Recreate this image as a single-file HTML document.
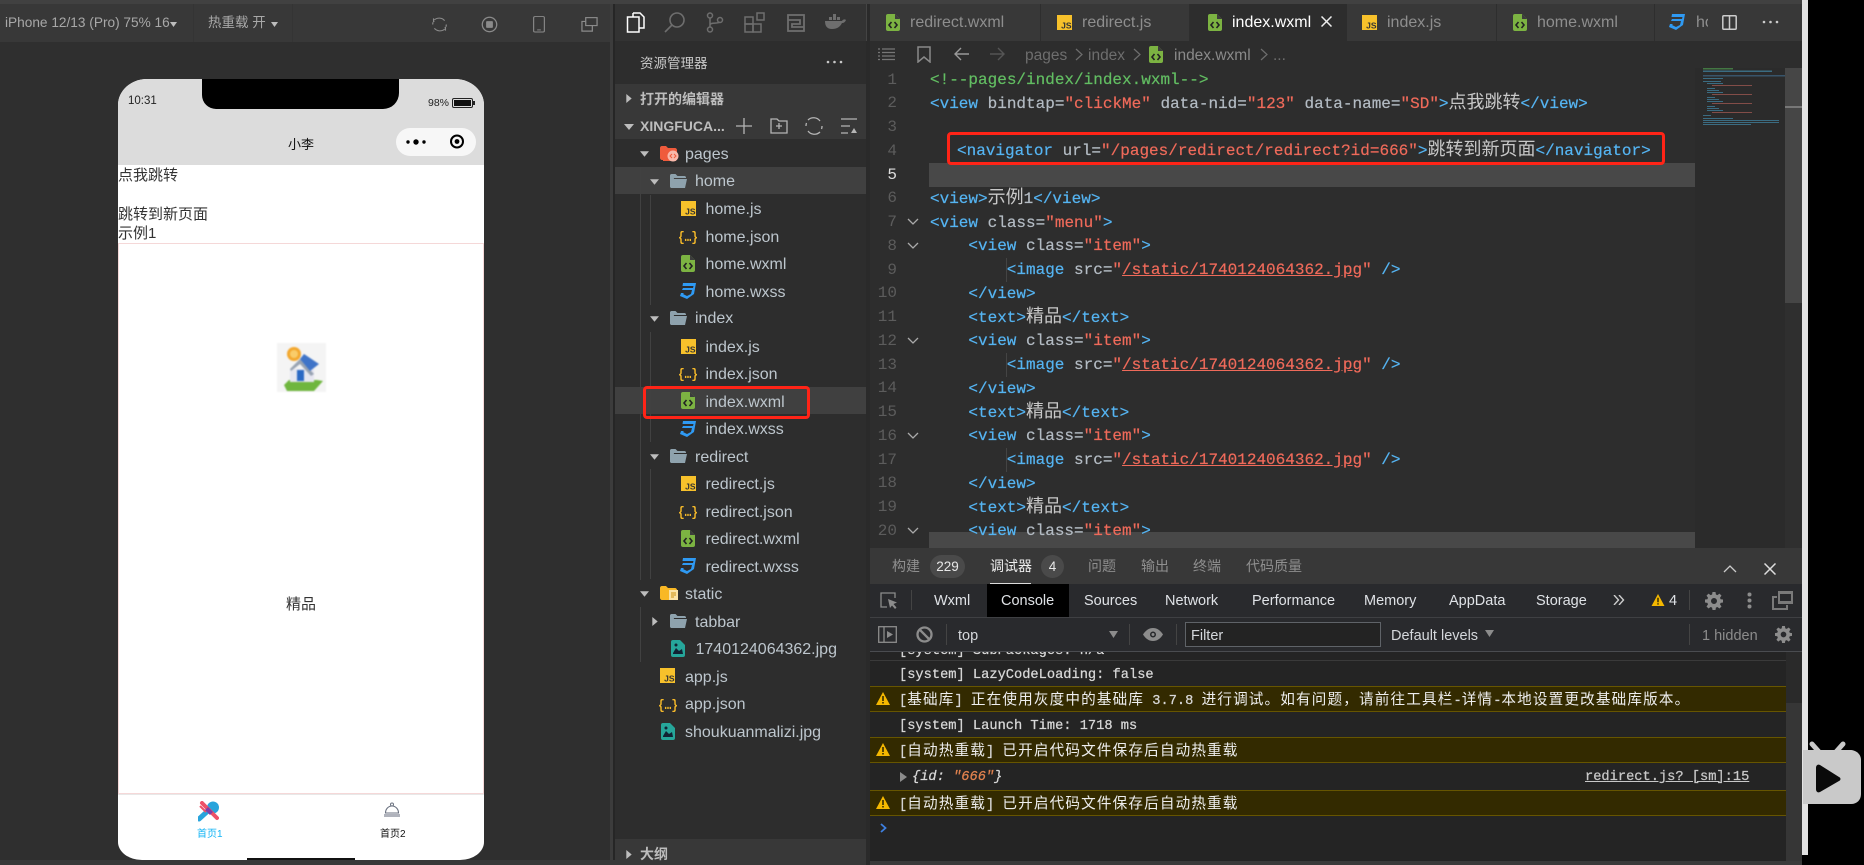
<!DOCTYPE html>
<html><head><meta charset="utf-8"><style>
html,body{margin:0;padding:0;background:#000}
body{position:relative;width:1864px;height:865px;overflow:hidden;font-family:"Liberation Sans","Noto Sans CJK SC",sans-serif}
.a{position:absolute;white-space:nowrap}
.t{position:absolute;white-space:nowrap;font-size:16px;line-height:24px;height:24px;color:#bdc6cd;margin-top:1px}
.h{position:absolute;white-space:nowrap;font-size:14px;line-height:20px;font-weight:bold;color:#bdbdbd}
.i{position:absolute}
.l{position:absolute;left:874px;width:23px;text-align:right;font:16px/24px "Liberation Mono",monospace;color:#5c5c5c;margin-top:-.5px}
.c{position:absolute;white-space:pre;font:16px/24px "Liberation Mono","Noto Sans CJK SC",monospace;color:#b3bbc3;-webkit-text-stroke:.2px}
.c b{font-weight:normal;color:#55b4f2}.c i{font-style:normal;color:#ef6a5a}.c u{text-decoration:underline;color:#ef6a5a}
.c s{text-decoration:none;font-size:18px;line-height:0;color:#c8c8c8;font-family:"Liberation Sans","Noto Sans CJK SC",sans-serif;-webkit-text-stroke:0}
.p{position:absolute;white-space:nowrap;font-size:14px;line-height:20px;color:#8f8f8f;top:556px}
.d{position:absolute;white-space:nowrap;font-size:14.5px;line-height:20px;color:#dfe2e6;top:591px}
.f{position:absolute;white-space:nowrap;font-size:14.5px;line-height:20px;top:626px;color:#d5d8dc}
.m{position:absolute;left:899px;white-space:pre;font:13.7px/20px "Liberation Mono","Noto Sans CJK SC",monospace;color:#d8d8d8;-webkit-text-stroke:.25px}
.m s{text-decoration:none;font-family:"WenQuanYi Zen Hei","Noto Sans CJK SC",sans-serif;font-size:14.6px;line-height:0;letter-spacing:1.15px;color:#eee;-webkit-text-stroke:0}
.w{position:absolute;left:870px;width:916px;background:#332a00;border-top:1px solid #665500;border-bottom:1px solid #665500;box-sizing:border-box}
.tab{position:absolute;top:4px;height:37px;background:#383838;border-right:1px solid #2e2e2e;box-sizing:border-box}
.tt{position:absolute;top:7px;font-size:16px;line-height:24px;white-space:nowrap;color:#8e8e8e}
.g{position:absolute;width:1px;background:#414141}
</style></head><body>
<svg width="0" height="0" style="position:absolute"><defs>
<symbol id="js" viewBox="0 0 15 15"><rect width="15" height="15" fill="#f7c12b"/><text x="14.500" y="13.500" text-anchor="end" font-family="Liberation Sans" font-weight="bold" font-size="8.500" fill="#333">JS</text></symbol>
<symbol id="json" viewBox="0 0 20 16"><text x="10" y="13" text-anchor="middle" font-family="Liberation Mono" font-weight="bold" font-size="14" fill="#f5b92a" textLength="20" lengthAdjust="spacingAndGlyphs">{…}</text></symbol>
<symbol id="wx" viewBox="0 0 14 17"><path d="M2 0h7l5 5v10a2 2 0 0 1-2 2H2a2 2 0 0 1-2-2V2a2 2 0 0 1 2-2z" fill="#7cb342"/><path d="M9 0v5h5z" fill="#3c3c3c"/><path d="M5.500 8 3 11l2.500 3M8.500 8 11 11l-2.500 3" stroke="#222" stroke-width="1.600" fill="none"/></symbol>
<symbol id="css" viewBox="0 0 16 16"><path d="M3 0h13l-2 11-7 5-7-3 1-3h3l-1 1 4 2 4-2 1-4H2l1-2h10l.5-2H2.500z" fill="#2f9af3"/></symbol>
<symbol id="fo" viewBox="0 0 18 14"><path d="M1 1.500C1 .7 1.700 0 2.500 0h4l2 2h7c.8 0 1.500.7 1.500 1.500V4H5L3 14H2.500C1.700 14 1 13.300 1 12.500z" fill="#8ea2ad"/><path d="M4 5h14l-2 9H2z" fill="#8ea2ad"/></symbol>
<symbol id="img" viewBox="0 0 14 17"><path d="M2 0h7l5 5v10a2 2 0 0 1-2 2H2a2 2 0 0 1-2-2V2a2 2 0 0 1 2-2z" fill="#26a69a"/><path d="M2 13l3-5 3 3 3-2 1 5H2z" fill="#123"/><circle cx="5" cy="5" r="1.500" fill="#123"/></symbol>
<symbol id="dn" viewBox="0 0 10 6"><path d="M0 0h10L5 6z" fill="#bdbdbd"/></symbol>
<symbol id="rt" viewBox="0 0 6 10"><path d="M0 0v10l6-5z" fill="#bdbdbd"/></symbol>
<symbol id="gear" viewBox="0 0 18 18"><path fill-rule="evenodd" d="M7.500 0h3l.4 2.500 1.500.6L14.500 1.600l2 2-1.500 2.100.6 1.500L18 7.500v3l-2.400.4-.6 1.500 1.500 2.100-2 2-2.100-1.500-1.500.6-.4 2.400h-3l-.4-2.400-1.500-.6-2.100 1.500-2-2L3 12.400l-.6-1.500L0 10.500v-3l2.400-.3.6-1.500L1.500 3.600l2-2L5.600 3.100l1.500-.6zM9 6a3 3 0 1 0 0 6 3 3 0 0 0 0-6z" fill="#8c8c8c"/></symbol>
<symbol id="tri" viewBox="0 0 14 13"><path d="M7 0l7 13H0z" fill="#f5b800"/><path d="M6.200 4h1.600v5H6.200zM6.200 10h1.600v1.500H6.200z" fill="#332a00"/></symbol>
</defs></svg>

<!-- top strip & left simulator -->
<div class="a" style="left:0;top:0;width:1802px;height:4px;background:#414141"></div>
<div class="a" style="left:0;top:42px;width:610px;height:823px;background:#2f2f2f"></div>
<div class="a" style="left:0;top:4px;width:610px;height:38px;background:#383838"></div>
<div class="a" style="left:193px;top:4px;width:1px;height:38px;background:#343434"></div>
<div class="a" style="left:292px;top:4px;width:1px;height:38px;background:#343434"></div>
<div class="a" style="left:5px;top:13px;font-size:13.660px;line-height:20px;color:#a8a8a8">iPhone 12/13 (Pro) 75% 16</div>
<svg class="i" style="left:170px;top:21.500px" width="7" height="5" viewBox="0 0 10 6" preserveAspectRatio="none"><use href="#dn" width="10" height="6"/></svg>
<div class="a" style="left:208px;top:13px;font-size:13.500px;line-height:20px;color:#a8a8a8">热重载 开</div>
<svg class="i" style="left:271px;top:21.500px" width="7" height="5" viewBox="0 0 10 6" preserveAspectRatio="none"><use href="#dn" width="10" height="6"/></svg>
<svg class="i" style="left:431px;top:15.500px" width="17" height="17" viewBox="0 0 20 22" preserveAspectRatio="none" fill="none" stroke="#8b8b8b" stroke-width="1.400"><path d="M16 6a8 8 0 0 0-12-1M4 16a8 8 0 0 0 12 1M3 3v4h1M17 19v-4h-1M2 11a8 8 0 0 1 .5-3M18 11a8 8 0 0 1-.5 3"/></svg>
<svg class="i" style="left:480.500px;top:15.500px" width="17" height="17" viewBox="0 0 20 20" fill="none" stroke="#8b8b8b" stroke-width="1.500"><circle cx="10" cy="10" r="8.500"/><rect x="6" y="6" width="8" height="8" rx="1" fill="#8b8b8b" stroke="none"/></svg>
<svg class="i" style="left:533px;top:15.500px" width="12" height="17" viewBox="0 0 13 22" preserveAspectRatio="none" fill="none" stroke="#8b8b8b" stroke-width="1.200"><rect x=".7" y=".7" width="11.600" height="20" rx="1.500"/><path d="M4.500 18h4"/></svg>
<svg class="i" style="left:580.500px;top:16.500px" width="17" height="15" viewBox="0 0 18 17" preserveAspectRatio="none" fill="none" stroke="#8b8b8b" stroke-width="1.300"><rect x="5" y=".7" width="12" height="9"/><path d="M5 5H1v11h11v-6"/></svg>
<div class="a" style="left:610px;top:4px;width:3px;height:861px;background:#3c3c3c"></div>
<div class="a" style="left:613px;top:4px;width:2px;height:861px;background:#262626"></div>

<!-- phone -->
<div class="a" style="left:118px;top:79px;width:366px;height:781px;background:#fff;border-radius:29px 29px 24px 24px/26px 26px 18px 18px;overflow:hidden">
  <div class="a" style="left:0;top:0;width:366px;height:86px;background:#dcdcdc"></div>
  <div class="a" style="left:84px;top:0;width:197px;height:30px;background:#000;border-radius:0 0 16px 14px"></div>
  <div class="a" style="left:10px;top:15px;font-size:11.500px;line-height:14px;color:#222">10:31</div>
  <div class="a" style="left:310px;top:17px;font-size:10.500px;line-height:14px;color:#222">98%</div>
  <div class="a" style="left:334px;top:19px;width:21px;height:10px;border:1px solid #222;box-sizing:border-box;border-radius:2px;padding:1px"><div style="background:#111;height:100%"></div></div>
  <div class="a" style="left:355px;top:22px;width:2px;height:4px;background:#222"></div>
  <div class="a" style="left:124px;top:57px;width:118px;text-align:center;font-size:13px;line-height:18px;color:#111">小李</div>
  <div class="a" style="left:278px;top:49px;width:80px;height:28px;background:#f7f7f7;border-radius:14px"></div>
  <svg class="i" style="left:286px;top:54.700px" width="24" height="16" fill="#000"><circle cx="4" cy="8" r="1.700"/><circle cx="12" cy="8" r="2.700"/><circle cx="20" cy="8" r="1.700"/></svg>
  <svg class="i" style="left:330.600px;top:54.200px" width="17" height="17"><circle cx="8" cy="8.500" r="6" fill="none" stroke="#000" stroke-width="2"/><circle cx="8" cy="8.500" r="2.400" fill="#000"/></svg>
  <div class="a" style="left:0;top:84.500px;font-size:15px;line-height:23px;color:#333">点我跳转</div>
  <div class="a" style="left:0;top:123.500px;font-size:15px;line-height:23px;color:#333">跳转到新页面</div>
  <div class="a" style="left:0;top:142.500px;font-size:15px;line-height:23px;color:#333">示例1</div>
  <div class="a" style="left:0;top:164px;width:366px;height:551px;border:1px solid #f5d8d8;border-top-width:1.500px;box-sizing:border-box"></div>
  <svg class="i" style="left:159px;top:264px;filter:blur(.7px)" width="49" height="49" viewBox="0 0 49 49"><rect width="49" height="49" fill="#f4f4f4"/><circle cx="17" cy="11" r="7" fill="#f3a72e"/><circle cx="17" cy="11" r="4" fill="#f9cc6a"/><path d="M7 42l5-5 28 0 6 1-9 10H10z" fill="#6fb63e"/><path d="M13 26h24v13H13z" fill="#e6e6f0"/><path d="M13 26l10-10 14 15-3 2-11-12-9 7z" fill="#98a3b2"/><path d="M27 11l15 10-9 7-10-12z" fill="#3f74c8"/><rect x="20" y="27" width="7" height="11" fill="#2a68c4"/></svg>
  <div class="a" style="top:516px;width:306px;text-align:center;font-size:15px;line-height:20px;color:#333;left:30px">精品</div>
  <div class="a" style="left:0;top:715px;width:366px;height:1px;background:#e8e8e8"></div>
  <svg class="i" style="left:80px;top:722px;filter:blur(.3px)" width="22" height="21" viewBox="0 0 22 21"><path d="M1 18L12 8" stroke="#29a4dc" stroke-width="5" stroke-linecap="round"/><circle cx="15" cy="6.500" r="6" fill="#29a4dc"/><path d="M4 2l15 15" stroke="#ee5167" stroke-width="4" stroke-linecap="round"/><path d="M2 5l6 6" stroke="#ee5167" stroke-width="2"/><path d="M10 6l5 5-3 3-5-5z" fill="#7f3fa8"/></svg>
  <svg class="i" style="left:266px;top:723px" width="16" height="16" viewBox="0 0 16 16"><circle cx="8" cy="2.500" r="1.500" fill="none" stroke="#6b7280" stroke-width="1"/><path d="M1.500 11a6.500 7 0 0 1 13 0z" fill="none" stroke="#6b7280" stroke-width="1.100"/><rect x="0" y="12" width="16" height="3" fill="#b0b3bc"/></svg>
  <div class="a" style="left:79px;top:749px;font-size:10px;line-height:14px;color:#14b4f5;width:24px;text-align:center">首页1</div>
  <div class="a" style="left:262px;top:749px;font-size:10px;line-height:14px;color:#111;width:24px;text-align:center">首页2</div>
  <div class="a" style="left:129px;top:779px;width:108px;height:2px;background:#111"></div>
</div>
<div class="a" style="left:0;top:860px;width:615px;height:5px;background:#383838"></div>

<!-- sidebar -->
<div class="a" style="left:615px;top:4px;width:255px;height:861px;background:#2d2d2d"></div>
<div class="a" style="left:615px;top:4px;width:251px;height:37px;background:#333"></div>
<svg class="i" style="left:625px;top:12px" width="20" height="21" fill="none" stroke="#fff" stroke-width="1.500"><path d="M8 1h7l4 4v11h-5"/><path d="M8 1v4H2.500v15H14V5H8"/></svg>
<svg class="i" style="left:664px;top:12px" width="22" height="21" fill="none" stroke="#6e6e6e" stroke-width="1.600"><circle cx="13" cy="8" r="7"/><path d="M8 13l-7 7"/></svg>
<svg class="i" style="left:706px;top:12px" width="18" height="21" fill="none" stroke="#6e6e6e" stroke-width="1.500"><circle cx="4" cy="3.500" r="2.500"/><circle cx="4" cy="17.500" r="2.500"/><circle cx="14" cy="8" r="2.500"/><path d="M4 6v9M4 13c0-3 8-1 10-3"/></svg>
<svg class="i" style="left:744px;top:12px" width="22" height="21" fill="none" stroke="#6e6e6e" stroke-width="1.500"><rect x="1" y="5" width="8" height="7"/><rect x="1" y="12" width="8" height="8"/><rect x="9" y="12" width="8" height="8"/><rect x="13" y="1" width="7" height="7"/></svg>
<svg class="i" style="left:787px;top:14px" width="20" height="18" fill="none" stroke="#6e6e6e" stroke-width="1.800"><rect x="1" y="1" width="16" height="16"/><path d="M1 6h12v4H5v3h12"/></svg>
<svg class="i" style="left:825px;top:14px" width="22" height="16" fill="#6e6e6e"><path d="M0 7h17c1-2 3-2 4-1-1 2-2 3-4 3-2 4-5 6-10 6-5 0-7-3-7-8z"/><rect x="4" y="3" width="3" height="3"/><rect x="8" y="3" width="3" height="3"/><rect x="12" y="3" width="3" height="3"/><rect x="8" y="0" width="3" height="3"/></svg>
<div class="a" style="left:866px;top:4px;width:4px;height:861px;background:#2a2a2a"></div>
<div class="a" style="left:866px;top:4px;width:1px;height:37px;background:#444"></div>
<div class="h" style="left:640px;top:54px;font-weight:normal;font-size:13.500px;color:#c8c8c8">资源管理器</div>
<svg class="i" style="left:826px;top:60px" width="17" height="4" fill="#c8c8c8"><circle cx="2" cy="2" r="1.300"/><circle cx="8.500" cy="2" r="1.300"/><circle cx="15" cy="2" r="1.300"/></svg>

<div class="a" style="left:615px;top:84px;width:251px;height:55px;background:#383838"></div>
<svg class="i" style="left:626px;top:94px" width="6" height="9"><use href="#rt"/></svg>
<div class="h" style="left:640px;top:89px">打开的编辑器</div>
<svg class="i" style="left:624px;top:124px" width="10" height="6"><use href="#dn"/></svg>
<div class="h" style="left:640px;top:116px">XINGFUCA...</div>
<svg class="i" style="left:735px;top:118px" width="108" height="16" fill="none" stroke="#b5b5b5" stroke-width="1.300"><path d="M9 0v16M1 8h16"/><path d="M36 1h6l2 2h8v12H36zM44 5v6M41 8h6"/></svg>
<svg class="i" style="left:804px;top:117px" width="20" height="18" fill="none" stroke="#b5b5b5" stroke-width="1.300"><path d="M16 4a8 8 0 0 0-12-1M4 14a8 8 0 0 0 12 1M2 9a8 8 0 0 1 .5-3M18 9a8 8 0 0 1-.5 3"/></svg>
<svg class="i" style="left:840px;top:118px" width="18" height="16" fill="none" stroke="#b5b5b5" stroke-width="1.300"><path d="M1 1h16M1 8h9M1 15h7"/><path d="M11 15h6l-3-5z" fill="#b5b5b5" stroke="none"/></svg>

<div class="a" style="left:615px;top:167px;width:251px;height:27px;background:#404040"></div>
<div class="a" style="left:615px;top:387px;width:251px;height:27px;background:#404040"></div>
<div class="g" style="left:640px;top:168px;height:412px"></div>
<div class="g" style="left:650px;top:195px;height:110px"></div>
<div class="g" style="left:650px;top:332px;height:110px"></div>
<div class="g" style="left:650px;top:469px;height:110px"></div>
<div class="g" style="left:640px;top:607px;height:55px"></div>

<svg class="i" style="left:640px;top:151px" width="9" height="6"><use href="#dn"/></svg>
<svg class="i" style="left:660px;top:146px" width="19" height="16" viewBox="0 0 19 16"><path d="M0 2c0-1 .7-2 2-2h4l2 2h7c1 0 2 1 2 2v10H2c-1 0-2-1-2-2z" fill="#ef5b3c"/><path d="M3 5h13v10H3z" fill="#ef5b3c"/><circle cx="13" cy="10" r="5.500" fill="#f8b9ab"/><path d="M12 8l-2 2 2 2M14 8l2 2-2 2" stroke="#ef5b3c" fill="none"/></svg>
<div class="t" style="left:685px;top:142px">pages</div>
<svg class="i" style="left:650px;top:179px" width="9" height="6"><use href="#dn"/></svg>
<svg class="i" style="left:669px;top:174px" width="18" height="14"><use href="#fo"/></svg>
<div class="t" style="left:695px;top:169px">home</div>
<svg class="i" style="left:681px;top:201px" width="15" height="15"><use href="#js"/></svg><div class="t" style="left:705.500px;top:197px">home.js</div>
<svg class="i" style="left:678px;top:228px" width="20" height="16"><use href="#json"/></svg><div class="t" style="left:705.500px;top:224.500px">home.json</div>
<svg class="i" style="left:681px;top:255px" width="14" height="17"><use href="#wx"/></svg><div class="t" style="left:705.500px;top:252px">home.wxml</div>
<svg class="i" style="left:680px;top:283px" width="16" height="16"><use href="#css"/></svg><div class="t" style="left:705.500px;top:279.500px">home.wxss</div>
<svg class="i" style="left:650px;top:316px" width="9" height="6"><use href="#dn"/></svg>
<svg class="i" style="left:669px;top:311px" width="18" height="14"><use href="#fo"/></svg>
<div class="t" style="left:695px;top:306px">index</div>
<svg class="i" style="left:681px;top:339px" width="15" height="15"><use href="#js"/></svg><div class="t" style="left:705.500px;top:334.500px">index.js</div>
<svg class="i" style="left:678px;top:365px" width="20" height="16"><use href="#json"/></svg><div class="t" style="left:705.500px;top:362px">index.json</div>
<svg class="i" style="left:681px;top:392px" width="14" height="17"><use href="#wx"/></svg><div class="t" style="left:705.500px;top:389.500px">index.wxml</div>
<svg class="i" style="left:680px;top:421px" width="16" height="16"><use href="#css"/></svg><div class="t" style="left:705.500px;top:417px">index.wxss</div>
<svg class="i" style="left:650px;top:454px" width="9" height="6"><use href="#dn"/></svg>
<svg class="i" style="left:669px;top:449px" width="18" height="14"><use href="#fo"/></svg>
<div class="t" style="left:695px;top:444.500px">redirect</div>
<svg class="i" style="left:681px;top:476px" width="15" height="15"><use href="#js"/></svg><div class="t" style="left:705.500px;top:472px">redirect.js</div>
<svg class="i" style="left:678px;top:503px" width="20" height="16"><use href="#json"/></svg><div class="t" style="left:705.500px;top:499.500px">redirect.json</div>
<svg class="i" style="left:681px;top:530px" width="14" height="17"><use href="#wx"/></svg><div class="t" style="left:705.500px;top:527px">redirect.wxml</div>
<svg class="i" style="left:680px;top:558px" width="16" height="16"><use href="#css"/></svg><div class="t" style="left:705.500px;top:554.500px">redirect.wxss</div>
<svg class="i" style="left:640px;top:591px" width="9" height="6"><use href="#dn"/></svg>
<svg class="i" style="left:660px;top:586px" width="19" height="15" viewBox="0 0 19 15"><path d="M0 2c0-1 .7-2 2-2h4l2 2h7c1 0 2 1 2 2v10H2c-1 0-2-1-2-2z" fill="#f9b825"/><rect x="9" y="4" width="9" height="10" fill="#fbe3a6"/><path d="M11 7h5M11 9h5M11 11h3" stroke="#c98f10"/></svg>
<div class="t" style="left:685px;top:582px">static</div>
<svg class="i" style="left:652px;top:617px" width="6" height="9"><use href="#rt"/></svg>
<svg class="i" style="left:669px;top:614px" width="18" height="14"><use href="#fo"/></svg>
<div class="t" style="left:695px;top:609.500px">tabbar</div>
<svg class="i" style="left:671px;top:640px" width="14" height="17"><use href="#img"/></svg><div class="t" style="left:695.500px;top:637px">1740124064362.jpg</div>
<svg class="i" style="left:660px;top:668px" width="15" height="15"><use href="#js"/></svg><div class="t" style="left:685px;top:665px">app.js</div>
<svg class="i" style="left:658px;top:696px" width="20" height="16"><use href="#json"/></svg><div class="t" style="left:685px;top:692px">app.json</div>
<svg class="i" style="left:661px;top:723px" width="14" height="17"><use href="#img"/></svg><div class="t" style="left:685px;top:720px">shoukuanmalizi.jpg</div>
<div class="a" style="left:615px;top:839px;width:251px;height:26px;background:#383838"></div>
<svg class="i" style="left:626px;top:850px" width="6" height="9"><use href="#rt"/></svg>
<div class="h" style="left:640px;top:844px">大纲</div>

<!-- red box sidebar -->
<div class="a" style="left:643px;top:386px;width:167px;height:33px;border:3.500px solid #ff2417;border-radius:4px;box-sizing:border-box"></div>

<!-- tabs -->
<div class="a" style="left:870px;top:4px;width:932px;height:37px;background:#383838"></div>
<div class="tab" style="left:870px;width:171px"><svg class="i" style="left:16px;top:10px" width="14" height="17"><use href="#wx"/></svg><div class="tt" style="left:40px">redirect.wxml</div></div>
<div class="tab" style="left:1041px;width:149px"><svg class="i" style="left:16px;top:11px" width="15" height="15"><use href="#js"/></svg><div class="tt" style="left:41px">redirect.js</div></div>
<div class="tab" style="left:1190px;width:157px;background:#2d2d2d;border:0"><svg class="i" style="left:18px;top:10px" width="14" height="17"><use href="#wx"/></svg><div class="tt" style="left:42px;color:#fff">index.wxml</div><svg class="i" style="left:131px;top:12px" width="11" height="11" stroke="#eee" stroke-width="1.500"><path d="M.5.5l10 10M10.500.5l-10 10"/></svg></div>
<div class="tab" style="left:1347px;width:150px"><svg class="i" style="left:15px;top:11px" width="15" height="15"><use href="#js"/></svg><div class="tt" style="left:40px">index.js</div></div>
<div class="tab" style="left:1497px;width:158px"><svg class="i" style="left:16px;top:10px" width="14" height="17"><use href="#wx"/></svg><div class="tt" style="left:40px">home.wxml</div></div>
<div class="tab" style="left:1655px;width:147px;border:0"><svg class="i" style="left:14px;top:10px" width="16" height="16"><use href="#css"/></svg><div class="tt" style="left:41px;width:12px;overflow:hidden">home.wxss</div></div>
<svg class="i" style="left:1722px;top:15px" width="15" height="15" fill="none" stroke="#ccc" stroke-width="1.500"><rect x=".8" y=".8" width="13.400" height="13.400" rx="1"/><path d="M7.500 1v13"/></svg>
<svg class="i" style="left:1762px;top:20px" width="17" height="4" fill="#ccc"><circle cx="2" cy="2" r="1.300"/><circle cx="8.500" cy="2" r="1.300"/><circle cx="15" cy="2" r="1.300"/></svg>

<!-- editor -->
<div class="a" style="left:870px;top:41px;width:932px;height:507px;background:#2d2d2d;overflow:hidden"></div>
<svg class="i" style="left:878px;top:48px" width="17" height="13" stroke="#777" stroke-width="1.300"><path d="M0 1h2M4 1h13M0 4.500h2M4 4.500h13M0 8h2M4 8h13M0 11.500h2M4 11.500h13"/></svg>
<svg class="i" style="left:917px;top:46px" width="14" height="17" fill="none" stroke="#8a8a8a" stroke-width="1.500"><path d="M1 1h12v15l-6-5-6 5z"/></svg>
<svg class="i" style="left:953px;top:47px" width="17" height="14" fill="none" stroke="#9a9a9a" stroke-width="1.400"><path d="M16 7H2M8 1L2 7l6 6"/></svg>
<svg class="i" style="left:989px;top:47px" width="17" height="14" fill="none" stroke="#555" stroke-width="1.400"><path d="M1 7h14M9 1l6 6-6 6"/></svg>
<div class="a" style="left:1025px;top:45px;font-size:15.500px;line-height:22px;color:#6e6e6e">pages</div>
<svg class="i" style="left:1075px;top:48px" width="8" height="13" fill="none" stroke="#6e6e6e" stroke-width="1.200"><path d="M1 1l6 5.500L1 12"/></svg>
<div class="a" style="left:1088px;top:45px;font-size:15.500px;line-height:22px;color:#6e6e6e">index</div>
<svg class="i" style="left:1133px;top:48px" width="8" height="13" fill="none" stroke="#6e6e6e" stroke-width="1.200"><path d="M1 1l6 5.500L1 12"/></svg>
<svg class="i" style="left:1149px;top:46px" width="14" height="17"><use href="#wx"/></svg>
<div class="a" style="left:1174px;top:45px;font-size:15.500px;line-height:22px;color:#8a8a8a">index.wxml</div>
<svg class="i" style="left:1260px;top:48px" width="8" height="13" fill="none" stroke="#6e6e6e" stroke-width="1.200"><path d="M1 1l6 5.500L1 12"/></svg>
<div class="a" style="left:1273px;top:45px;font-size:15.500px;line-height:22px;color:#6e6e6e">...</div>

<div class="a" style="left:929px;top:163px;width:766px;height:24px;background:#484848"></div>
<div class="a" style="left:929px;top:532px;width:766px;height:16px;background:#484848"></div>
<div class="a" style="left:1006px;top:258px;width:1px;height:24px;background:#444"></div>
<div class="a" style="left:1006px;top:353px;width:1px;height:24px;background:#444"></div>
<div class="a" style="left:1006px;top:448px;width:1px;height:24px;background:#444"></div>

<div class="l" style="top:68px">1</div><div class="l" style="top:91.750px">2</div><div class="l" style="top:115.500px">3</div><div class="l" style="top:139.250px">4</div><div class="l" style="top:163px;color:#ddd">5</div><div class="l" style="top:186.750px">6</div><div class="l" style="top:210.500px">7</div><div class="l" style="top:234.250px">8</div><div class="l" style="top:258px">9</div><div class="l" style="top:281.750px">10</div><div class="l" style="top:305.500px">11</div><div class="l" style="top:329.250px">12</div><div class="l" style="top:353px">13</div><div class="l" style="top:376.750px">14</div><div class="l" style="top:400.500px">15</div><div class="l" style="top:424.250px">16</div><div class="l" style="top:448px">17</div><div class="l" style="top:471.750px">18</div><div class="l" style="top:495.500px">19</div><div class="l" style="top:519.250px">20</div>
<svg class="i" style="left:907px;top:218px" width="12" height="8" fill="none" stroke="#aaa" stroke-width="1.300"><path d="M1 1l5 5 5-5"/></svg>
<svg class="i" style="left:907px;top:242px" width="12" height="8" fill="none" stroke="#aaa" stroke-width="1.300"><path d="M1 1l5 5 5-5"/></svg>
<svg class="i" style="left:907px;top:337px" width="12" height="8" fill="none" stroke="#aaa" stroke-width="1.300"><path d="M1 1l5 5 5-5"/></svg>
<svg class="i" style="left:907px;top:432px" width="12" height="8" fill="none" stroke="#aaa" stroke-width="1.300"><path d="M1 1l5 5 5-5"/></svg>
<svg class="i" style="left:907px;top:527px" width="12" height="8" fill="none" stroke="#aaa" stroke-width="1.300"><path d="M1 1l5 5 5-5"/></svg>

<div class="c" style="left:930px;top:68px;color:#62bd62">&lt;!--pages/index/index.wxml--&gt;</div>
<div class="c" style="left:930px;top:91.750px"><b>&lt;view</b> bindtap=<i>"clickMe"</i> data-nid=<i>"123"</i> data-name=<i>"SD"</i><b>&gt;</b><s>点我跳转</s><b>&lt;/view&gt;</b></div>
<div class="c" style="left:957px;top:139.250px"><b>&lt;navigator</b> url=<i>"/pages/redirect/redirect?id=666"</i><b>&gt;</b><s>跳转到新页面</s><b>&lt;/navigator&gt;</b></div>
<div class="c" style="left:930px;top:186.750px"><b>&lt;view&gt;</b><s>示例</s>1<b>&lt;/view&gt;</b></div>
<div class="c" style="left:930px;top:210.500px"><b>&lt;view</b> class=<i>"menu"</i><b>&gt;</b></div>
<div class="c" style="left:968.400px;top:234.250px"><b>&lt;view</b> class=<i>"item"</i><b>&gt;</b></div>
<div class="c" style="left:1006.800px;top:258px"><b>&lt;image</b> src=<i>"</i><u>/static/1740124064362.jpg</u><i>"</i> <b>/&gt;</b></div>
<div class="c" style="left:968.400px;top:281.750px"><b>&lt;/view&gt;</b></div>
<div class="c" style="left:968.400px;top:305.500px"><b>&lt;text&gt;</b><s>精品</s><b>&lt;/text&gt;</b></div>
<div class="c" style="left:968.400px;top:329.250px"><b>&lt;view</b> class=<i>"item"</i><b>&gt;</b></div>
<div class="c" style="left:1006.800px;top:353px"><b>&lt;image</b> src=<i>"</i><u>/static/1740124064362.jpg</u><i>"</i> <b>/&gt;</b></div>
<div class="c" style="left:968.400px;top:376.750px"><b>&lt;/view&gt;</b></div>
<div class="c" style="left:968.400px;top:400.500px"><b>&lt;text&gt;</b><s>精品</s><b>&lt;/text&gt;</b></div>
<div class="c" style="left:968.400px;top:424.250px"><b>&lt;view</b> class=<i>"item"</i><b>&gt;</b></div>
<div class="c" style="left:1006.800px;top:448px"><b>&lt;image</b> src=<i>"</i><u>/static/1740124064362.jpg</u><i>"</i> <b>/&gt;</b></div>
<div class="c" style="left:968.400px;top:471.750px"><b>&lt;/view&gt;</b></div>
<div class="c" style="left:968.400px;top:495.500px"><b>&lt;text&gt;</b><s>精品</s><b>&lt;/text&gt;</b></div>
<div class="c" style="left:968.400px;top:519.250px"><b>&lt;view</b> class=<i>"item"</i><b>&gt;</b></div>
<div class="a" style="left:947px;top:132px;width:718px;height:33px;border:3.500px solid #ff2417;border-radius:4px;box-sizing:border-box"></div>

<!-- minimap + scrollbar -->
<div class="a" style="left:1695px;top:68px;width:90px;height:480px;background:#2b2b2b"></div>
<div class="a" style="left:1785px;top:68px;width:17px;height:480px;background:#2f2f2f"></div>
<div class="a" style="left:1785px;top:68px;width:17px;height:235px;background:#464646"></div>
<div class="a" style="left:1785px;top:106px;width:17px;height:2px;background:#777"></div>
<svg class="i" style="left:1703px;top:68px;opacity:.8" width="82" height="60"><g fill="#3f7d98"><rect y="0" width="30" height="1.500" fill="#4a8a4a"/><rect y="2.500" width="69" height="1.500"/><rect x="0" y="7" width="82" height="1.500" fill="#3c5f7a"/><rect y="10" width="20" height="1"/><rect y="13" width="18" height="1"/><rect x="4" y="15" width="16" height="1"/><rect x="9" y="17" width="40" height="1" fill="#9a5650"/><rect x="4" y="20" width="8" height="1"/><rect x="4" y="22" width="12" height="1"/><rect x="4" y="24" width="16" height="1"/><rect x="9" y="26" width="40" height="1" fill="#9a5650"/><rect x="4" y="29" width="8" height="1"/><rect x="4" y="31" width="12" height="1"/><rect x="4" y="33" width="16" height="1"/><rect x="9" y="35" width="40" height="1" fill="#9a5650"/><rect x="4" y="38" width="8" height="1"/><rect x="4" y="40" width="12" height="1"/><rect x="4" y="42" width="16" height="1"/><rect x="9" y="44" width="40" height="1" fill="#9a5650"/><rect y="47" width="8" height="1"/><rect y="50" width="30" height="1"/><rect y="52" width="76" height="1"/><rect y="54" width="76" height="1"/><rect y="56" width="48" height="1"/></g></svg>

<!-- bottom panel -->
<div class="a" style="left:870px;top:548px;width:932px;height:36px;background:#383838"></div>
<div class="p" style="left:892px">构建</div>
<div class="a" style="left:930px;top:555px;width:35px;height:23px;border-radius:12px;background:#4a4a4a;color:#e8e8e8;font-size:13.500px;line-height:23px;text-align:center">229</div>
<div class="p" style="left:990px;color:#eee">调试器</div>
<div class="a" style="left:990px;top:582.500px;width:41px;height:1.500px;background:#ddd"></div>
<div class="a" style="left:1041px;top:555px;width:23px;height:23px;border-radius:12px;background:#4a4a4a;color:#e8e8e8;font-size:13.500px;line-height:23px;text-align:center">4</div>
<div class="p" style="left:1088px">问题</div><div class="p" style="left:1141px">输出</div><div class="p" style="left:1193px">终端</div><div class="p" style="left:1246px">代码质量</div>
<svg class="i" style="left:1723px;top:565px" width="14" height="8" fill="none" stroke="#ccc" stroke-width="1.300"><path d="M1 7l6-6 6 6"/></svg>
<svg class="i" style="left:1764px;top:563px" width="12" height="12" stroke="#ddd" stroke-width="1.500"><path d="M.5.5l11 11M11.500.5l-11 11"/></svg>

<div class="a" style="left:870px;top:584px;width:932px;height:33px;background:#292a2d"></div>
<div class="a" style="left:870px;top:617px;width:932px;height:1px;background:#3f4043"></div>
<div class="a" style="left:870px;top:618px;width:932px;height:33px;background:#292a2d"></div>
<div class="a" style="left:870px;top:651px;width:932px;height:1px;background:#4a4c50"></div>
<svg class="i" style="left:880px;top:592px" width="18" height="18" fill="none" stroke="#8c8c8c" stroke-width="1.300"><path d="M7 15H1V1h14v5"/><path d="M8 7l9 3.500-3.500 1.500 3 3.500-1.500 1.500-3-3.500L10 16z" fill="#8c8c8c" stroke="none"/></svg>
<div class="a" style="left:911px;top:590px;width:1px;height:20px;background:#444"></div>
<div class="d" style="left:934px">Wxml</div>
<div class="a" style="left:987px;top:584px;width:82px;height:33px;background:#000"></div>
<div class="d" style="left:1001px">Console</div><div class="d" style="left:1084px">Sources</div><div class="d" style="left:1165px">Network</div><div class="d" style="left:1252px">Performance</div><div class="d" style="left:1364px">Memory</div><div class="d" style="left:1449px">AppData</div><div class="d" style="left:1536px">Storage</div>
<svg class="i" style="left:1613px;top:595px" width="12" height="10" fill="none" stroke="#ccc" stroke-width="1.400"><path d="M1 0l4.500 5L1 10M6 0l4.500 5L6 10"/></svg>
<svg class="i" style="left:1651px;top:594px" width="14" height="12"><use href="#tri"/></svg>
<div class="d" style="left:1669px">4</div>
<div class="a" style="left:1689px;top:590px;width:1px;height:20px;background:#444"></div>
<svg class="i" style="left:1705px;top:592px" width="18" height="18"><use href="#gear"/></svg>
<svg class="i" style="left:1747px;top:592px" width="5" height="17" fill="#8c8c8c"><circle cx="2.500" cy="2.500" r="2"/><circle cx="2.500" cy="8.500" r="2"/><circle cx="2.500" cy="14.500" r="2"/></svg>
<svg class="i" style="left:1772px;top:591px" width="21" height="19" fill="#7a7a7a"><path d="M6 0h15v13H6zM8 3v7h11V3z" fill-rule="evenodd"/><path d="M0 5h5v2H2v10h12v-3h2v5H0z"/></svg>

<svg class="i" style="left:878px;top:626px" width="19" height="17" fill="none" stroke="#8c8c8c" stroke-width="1.300"><rect x=".7" y=".7" width="17.600" height="15.600"/><path d="M6 1v15"/><path d="M9 5l6 3.500L9 12z" fill="#8c8c8c" stroke="none"/></svg>
<svg class="i" style="left:916px;top:626px" width="17" height="17" fill="none" stroke="#8c8c8c" stroke-width="2.300"><circle cx="8.500" cy="8.500" r="7"/><path d="M3.500 3.500l10 10"/></svg>
<div class="a" style="left:946px;top:624px;width:1px;height:21px;background:#444"></div>
<div class="f" style="left:958px">top</div>
<svg class="i" style="left:1109px;top:631px" width="9" height="7"><path d="M0 0h9L4.500 7z" fill="#8c8c8c"/></svg>
<div class="a" style="left:1129px;top:624px;width:1px;height:21px;background:#444"></div>
<svg class="i" style="left:1143px;top:628px" width="20" height="13"><path d="M0 6.500C3 2 6 0 10 0s7 2 10 6.500C17 11 14 13 10 13S3 11 0 6.500z" fill="#8c8c8c"/><circle cx="10" cy="6.500" r="3" fill="#292a2d"/><circle cx="10" cy="6.500" r="1.500" fill="#8c8c8c"/></svg>
<div class="a" style="left:1176px;top:624px;width:1px;height:21px;background:#444"></div>
<div class="a" style="left:1185px;top:622px;width:196px;height:25px;background:#232323;border:1px solid #5f6368;box-sizing:border-box"></div>
<div class="f" style="left:1191px">Filter</div>
<div class="f" style="left:1391px">Default levels</div>
<svg class="i" style="left:1485px;top:630px" width="9" height="7"><path d="M0 0h9L4.500 7z" fill="#8c8c8c"/></svg>
<div class="a" style="left:1689px;top:624px;width:1px;height:21px;background:#444"></div>
<div class="f" style="left:1702px;color:#8c8c8c">1 hidden</div>
<svg class="i" style="left:1775px;top:626px" width="17" height="17"><use href="#gear"/></svg>

<!-- console -->
<div class="a" style="left:870px;top:652px;width:916px;height:209px;background:#242424;overflow:hidden">
  <div class="m" style="left:29px;top:-10.500px">[system] SubPackages: n/a</div>
</div>
<div class="a" style="left:870px;top:660px;width:916px;height:1px;background:#3a3a3a"></div>
<div class="a" style="left:1786px;top:652px;width:16px;height:209px;background:#2a2a2a"></div>
<div class="a" style="left:1786px;top:703px;width:16px;height:158px;background:#363636"></div>
<div class="m" style="top:666px">[system] LazyCodeLoading: false</div>
<div class="w" style="top:686px;height:26px"></div>
<svg class="i" style="left:876px;top:692px" width="14" height="13"><use href="#tri"/></svg>
<div class="m" style="top:691.500px">[<s>基础库</s>] <s>正在使用灰度中的基础库</s> 3.7.8 <s>进行调试。如有问题，请前往工具栏</s>-<s>详情</s>-<s>本地设置更改基础库版本。</s></div>
<div class="m" style="top:716.500px">[system] Launch Time: 1718 ms</div>
<div class="w" style="top:737px;height:26px"></div>
<svg class="i" style="left:876px;top:743px" width="14" height="13"><use href="#tri"/></svg>
<div class="m" style="top:742.500px">[<s>自动热重载</s>] <s>已开启代码文件保存后自动热重载</s></div>
<svg class="i" style="left:900px;top:772px" width="7" height="10"><path d="M0 0l7 5-7 5z" fill="#8c8c8c"/></svg>
<div class="m" style="left:912px;top:768px;font-style:italic">{id: <span style="color:#e0814e">"666"</span>}</div>
<div class="m" style="left:1585px;top:768px;text-decoration:underline;color:#c8c8c8">redirect.js? [sm]:15</div>
<div class="w" style="top:790px;height:26px"></div>
<svg class="i" style="left:876px;top:796px" width="14" height="13"><use href="#tri"/></svg>
<div class="m" style="top:795.500px">[<s>自动热重载</s>] <s>已开启代码文件保存后自动热重载</s></div>
<svg class="i" style="left:880px;top:823px" width="7" height="10" fill="none" stroke="#3d7fe0" stroke-width="1.800"><path d="M1 1l4.500 4L1 9"/></svg>
<div class="a" style="left:870px;top:861px;width:932px;height:4px;background:#3a3a3a"></div>

<!-- right side -->
<div class="a" style="left:1802px;top:0;width:6px;height:855px;background:#e2e2e2"></div>
<div class="a" style="left:1808px;top:0;width:56px;height:865px;background:#000"></div>
<svg class="i" style="left:1803px;top:741px" width="59" height="66" viewBox="0 0 59 66"><path d="M9 3l8 9M40 3l-8 9" stroke="#c9c9c9" stroke-width="5" stroke-linecap="round"/><path d="M0 9h47c6 0 11 4 11 10v34c0 6-4 10-10 10H0z" fill="#c9c9c9"/><path d="M13 27c0-3 2-4 4-3l19 12c2 1 2 3 0 4L17 51c-2 1-4 0-4-3z" fill="#0a0a0a"/></svg>
</body></html>
